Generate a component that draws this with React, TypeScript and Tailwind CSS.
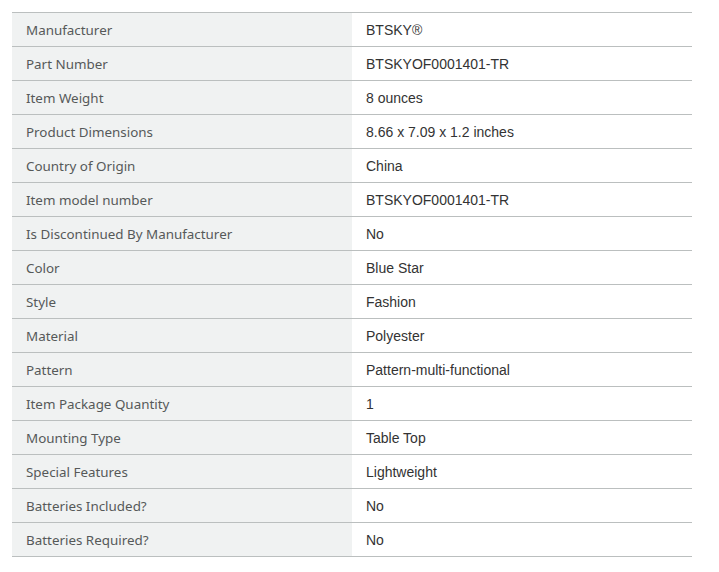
import React from "react";

const rows: [string, string][] = [
  ["Manufacturer", "BTSKY®"],
  ["Part Number", "BTSKYOF0001401-TR"],
  ["Item Weight", "8 ounces"],
  ["Product Dimensions", "8.66 x 7.09 x 1.2 inches"],
  ["Country of Origin", "China"],
  ["Item model number", "BTSKYOF0001401-TR"],
  ["Is Discontinued By Manufacturer", "No"],
  ["Color", "Blue Star"],
  ["Style", "Fashion"],
  ["Material", "Polyester"],
  ["Pattern", "Pattern-multi-functional"],
  ["Item Package Quantity", "1"],
  ["Mounting Type", "Table Top"],
  ["Special Features", "Lightweight"],
  ["Batteries Included?", "No"],
  ["Batteries Required?", "No"],
];

export default function App() {
  return (
    <div className="bg-white w-[719px] h-[572px] pt-[12px] pl-[12px]">
      <table className="w-[680px] border-collapse border-t border-[#bbbfbf]">
        <tbody>
          {rows.map(([label, value]) => (
            <tr key={label} className="h-[34px] border-b border-[#bbbfbf]">
              <th className="w-[340px] bg-[#f0f2f2] px-[14px] pt-[2px] pb-0 text-left align-middle font-normal text-[13.4px] text-[#565959] font-['Noto_Sans',sans-serif]">
                {label}
              </th>
              <td className="px-[14px] pt-[2px] pb-0 align-middle text-[14px] text-[#333333] font-['Liberation_Sans',Arial,sans-serif]">
                {value}
              </td>
            </tr>
          ))}
        </tbody>
      </table>
    </div>
  );
}
